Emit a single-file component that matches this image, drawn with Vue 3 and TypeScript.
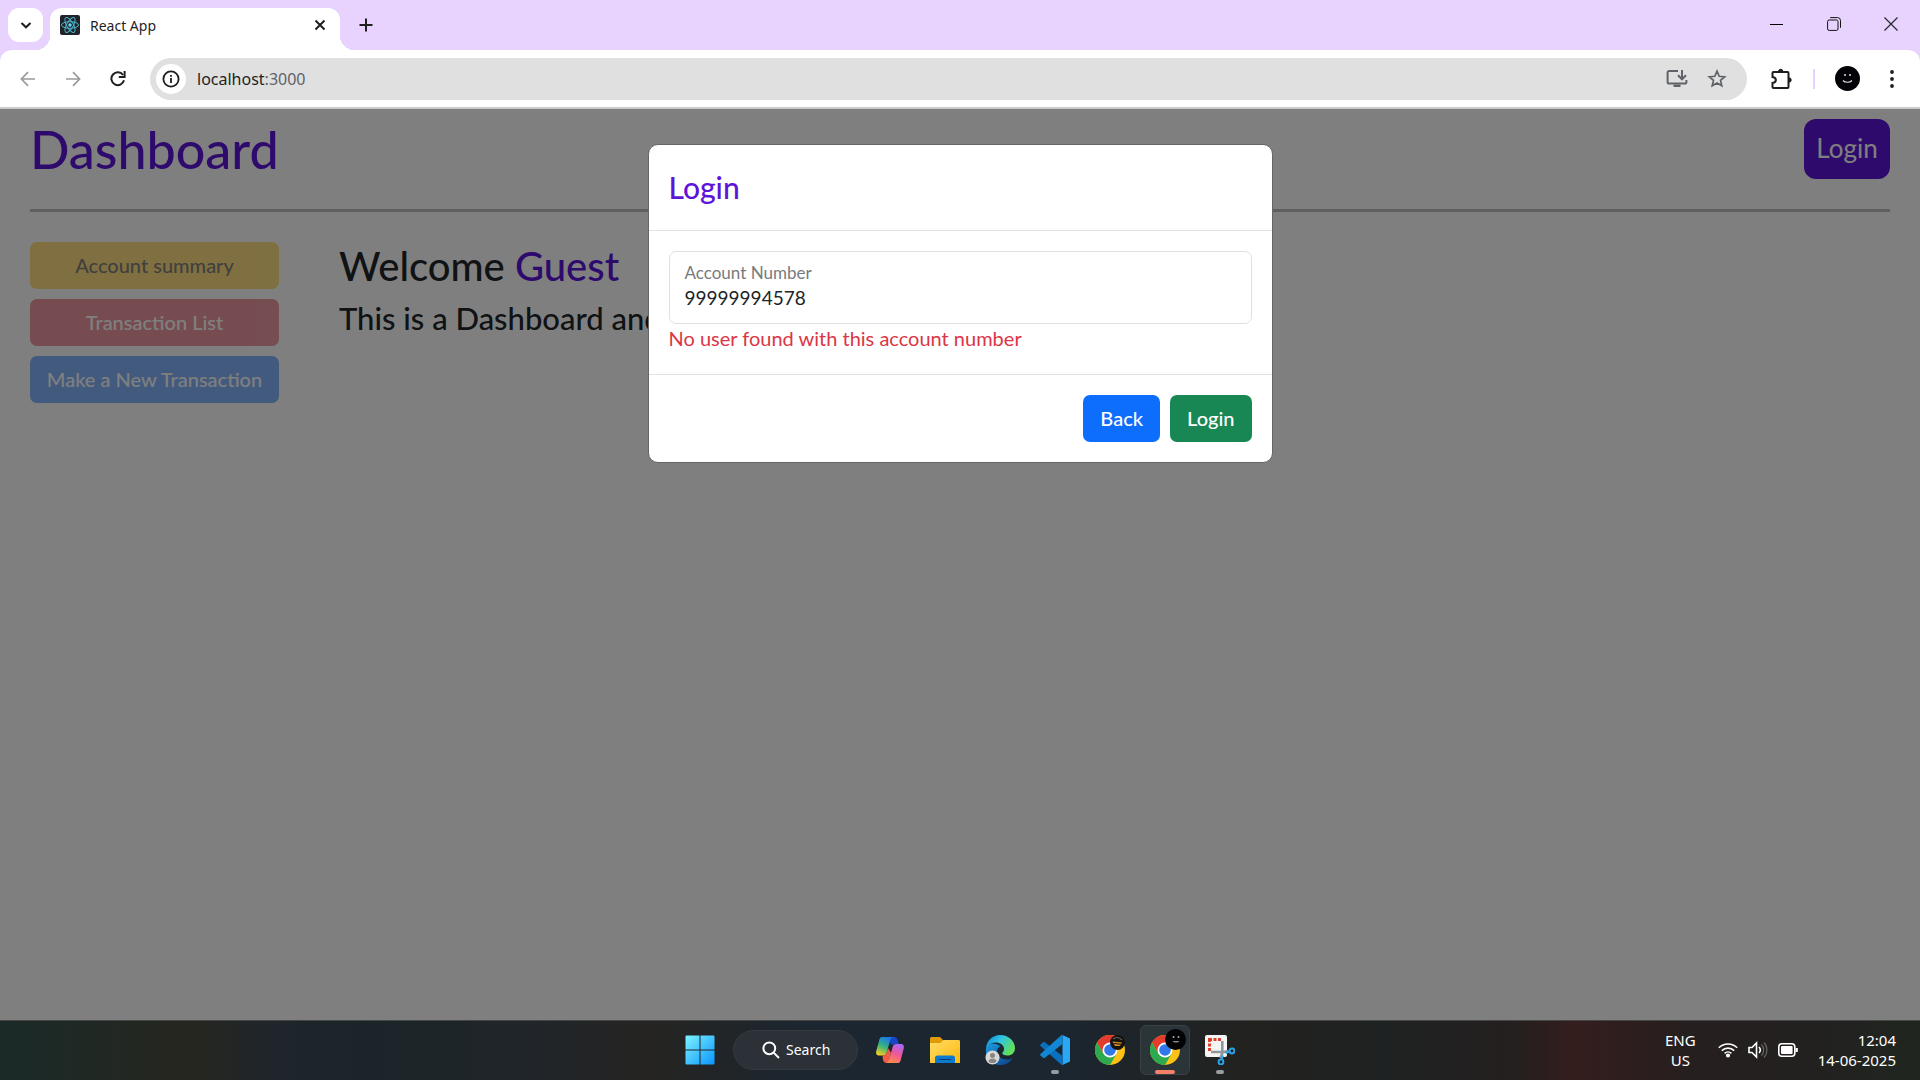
<script setup lang="ts">
import { ref } from 'vue'

interface NavAction {
  label: string
  tone: 'warning' | 'danger' | 'primary'
}

const address = ref('localhost:3000')
const accountNumber = ref('99999994578')
const errorMessage = ref('No user found with this account number')

const actions: NavAction[] = [
  { label: 'Account summary', tone: 'warning' },
  { label: 'Transaction List', tone: 'danger' },
  { label: 'Make a New Transaction', tone: 'primary' },
]
</script>

<template>
  <div class="screen">
    <header class="browser">
      <div class="tabstrip">
        <button class="tab-search" aria-label="Search tabs">
          <svg width="12" height="12" viewBox="0 0 12 12" fill="none" stroke="#1f1f1f" stroke-width="2"><path d="M1.5 4 6 8.3 10.5 4" /></svg>
        </button>
        <div class="tab">
          <svg class="favicon" width="20" height="20" viewBox="0 0 20 20" fill="none" stroke="#4db5cd" stroke-width="1">
            <rect width="20" height="20" rx="2" fill="#20232a" stroke="none" />
            <ellipse cx="10" cy="10" rx="8.5" ry="3.3" />
            <ellipse cx="10" cy="10" rx="8.5" ry="3.3" transform="rotate(60 10 10)" />
            <ellipse cx="10" cy="10" rx="8.5" ry="3.3" transform="rotate(120 10 10)" />
            <circle cx="10" cy="10" r="1.7" fill="#61dafb" stroke="none" />
          </svg>
          <span class="tab-title">React App</span>
          <button class="icon-btn small" aria-label="Close tab">
            <svg width="12" height="12" viewBox="0 0 12 12" stroke="#1f1f1f" stroke-width="2"><path d="M1.5 1.5l9 9M10.5 1.5l-9 9" /></svg>
          </button>
        </div>
        <button class="icon-btn new-tab" aria-label="New tab">
          <svg width="14" height="14" viewBox="0 0 14 14" stroke="#1f1f1f" stroke-width="2"><path d="M7 .5v13M.5 7h13" /></svg>
        </button>
        <div class="window-controls">
          <button aria-label="Minimize"><svg width="13" height="13" viewBox="0 0 13 13" stroke="#000"><path d="M0 6.5h13" /></svg></button>
          <button aria-label="Restore"><svg width="14" height="14" viewBox="0 0 14 14" fill="none" stroke="#111"><rect x=".6" y="3" width="10.4" height="10.4" rx="1.5" /><path d="M3.2.6h7.3a3 3 0 0 1 3 3v7.2" /></svg></button>
          <button aria-label="Close"><svg width="14" height="14" viewBox="0 0 14 14" stroke="#222" stroke-width="1.1"><path d="M.5.5l13 13M13.5.5l-13 13" /></svg></button>
        </div>
      </div>

      <div class="toolbar">
        <button class="icon-btn nav" aria-label="Back">
          <svg width="16" height="16" viewBox="0 0 16 16" fill="none" stroke="#9b9b9b" stroke-width="1.7"><path d="M15 8H2M8 1.2 1.4 8 8 14.8" /></svg>
        </button>
        <button class="icon-btn nav" aria-label="Forward">
          <svg width="16" height="16" viewBox="0 0 16 16" fill="none" stroke="#9b9b9b" stroke-width="1.7"><path d="M1 8h13M8 1.2 14.6 8 8 14.8" /></svg>
        </button>
        <button class="icon-btn nav" aria-label="Reload">
          <svg width="16" height="16" viewBox="0 0 16 16" fill="none" stroke="#1f1f1f" stroke-width="2"><path d="M14 9.3A6.4 6.4 0 1 1 13 4" /><path d="M14.6 0v6H8.8" /></svg>
        </button>
        <div class="omnibox">
          <button class="site-info" aria-label="View site information">
            <svg width="18" height="18" viewBox="0 0 18 18" fill="none" stroke="#1f1f1f" stroke-width="1.8"><circle cx="9" cy="9" r="7.6" /><path d="M9 8v5M9 5v1.8" /></svg>
          </button>
          <div class="address">
            <span class="host">{{ address.split(':')[0] }}</span><span class="port">:{{ address.split(':')[1] }}</span>
          </div>
          <button class="icon-btn omni-action" aria-label="Install app">
            <svg width="22" height="20" viewBox="0 0 22 20" fill="none" stroke="#5f6368" stroke-width="2"><path d="M12 2H3.2A1.6 1.6 0 0 0 1.6 3.6V13a1.6 1.6 0 0 0 1.6 1.6h15.6a1.6 1.6 0 0 0 1.6-1.6v-2M16 1v9M12 6.3l4 4 4-4" /><path d="M7.5 15.5h7V18h-7z" fill="#5f6368" stroke="none" /></svg>
          </button>
          <button class="icon-btn omni-action" aria-label="Bookmark this tab">
            <svg width="20" height="20" viewBox="0 0 20 20" fill="none" stroke="#5f6368" stroke-width="1.7"><path d="M10 2.2l2.2 5.1 5.5.5-4.2 3.6 1.3 5.4L10 13.9l-4.800 2.900 1.300-5.400-4.200-3.600 5.500-.5z" /></svg>
          </button>
        </div>
        <button class="icon-btn ext" aria-label="Extensions">
          <svg width="22" height="22" viewBox="0 0 22 22" fill="none" stroke="#1f1f1f" stroke-width="2"><path d="M3.500 4h14a1 1 0 0 1 1 1v14a1 1 0 0 1-1 1h-14a1 1 0 0 1-1-1v-4c4.500-.5 4.500-5.500 0-6V5a1 1 0 0 1 1-1z" /><path d="M8.500 3.500a2.200 2.200 0 0 1 4.400 0zM19 9.800a2.200 2.200 0 0 1 0 4.400z" fill="#1f1f1f" stroke-width="1" /></svg>
        </button>
        <span class="divider"></span>
        <button class="icon-btn profile" aria-label="Profile">
          <svg width="25" height="25" viewBox="0 0 25 25"><circle cx="12.500" cy="12.500" r="12.500" fill="#030307" /><path d="M8 14.500c2 2.300 7 2.300 9 0" fill="none" stroke="#ddd" stroke-width="1.200" /><circle cx="10" cy="9" r="1" fill="#ddd" /><circle cx="15" cy="9" r="1" fill="#ddd" /></svg>
        </button>
        <button class="icon-btn more" aria-label="Menu">
          <svg width="4" height="18" viewBox="0 0 4 18" fill="#1f1f1f"><circle cx="2" cy="2" r="1.900" /><circle cx="2" cy="9" r="1.900" /><circle cx="2" cy="16" r="1.900" /></svg>
        </button>
      </div>
    </header>

    <div class="viewport">
      <main class="page">
        <div class="page-head">
          <h1>Dashboard</h1>
          <button class="login-btn">Login</button>
        </div>
        <hr />
        <div class="content">
          <nav class="actions">
            <button v-for="action in actions" :key="action.label" class="btn" :class="action.tone" disabled>{{ action.label }}</button>
          </nav>
          <section class="intro">
            <h2>Welcome <span class="accent">Guest</span></h2>
            <p>This is a Dashboard and</p>
          </section>
        </div>
      </main>

      <div class="backdrop">
        <form class="modal" role="dialog" aria-labelledby="modal-title" @submit.prevent>
          <div class="modal-head">
            <h3 id="modal-title">Login</h3>
          </div>
          <div class="modal-body">
            <div class="field">
              <label for="account">Account Number</label>
              <input id="account" v-model="accountNumber" type="text" />
            </div>
            <p class="error">{{ errorMessage }}</p>
          </div>
          <div class="modal-foot">
            <button type="button" class="btn primary">Back</button>
            <button type="submit" class="btn success">Login</button>
          </div>
        </form>
      </div>
    </div>

    <footer class="taskbar">
      <div class="task-center">
        <button class="task" aria-label="Start">
          <svg width="30" height="30" viewBox="0 0 30 30">
            <defs><linearGradient id="win" x1="0" y1="0" x2="1" y2="1"><stop offset="0" stop-color="#7df3ff" /><stop offset="1" stop-color="#0a95ff" /></linearGradient></defs>
            <path d="M1.500.5h13v14H.500v-13a1 1 0 0 1 1-1zM15.500.5h13a1 1 0 0 1 1 1v13h-14zM.500 15.500h14v14h-13a1 1 0 0 1-1-1zM15.500 15.500h14v13a1 1 0 0 1-1 1h-13z" fill="url(#win)" />
          </svg>
        </button>
        <button class="search">
          <svg width="18" height="18" viewBox="0 0 18 18" fill="none" stroke="#fff" stroke-width="2"><circle cx="7.300" cy="7.300" r="5.900" /><path d="M11.600 11.600l5.400 5.400" /></svg>
          <span>Search</span>
        </button>
        <button class="task" aria-label="Copilot">
          <svg width="30" height="30" viewBox="0 0 30 30">
            <defs>
              <linearGradient id="cpA" x1=".6" y1="0" x2=".2" y2="1"><stop offset="0" stop-color="#1b78e8" /><stop offset=".5" stop-color="#38b47c" /><stop offset="1" stop-color="#ffd11a" /></linearGradient>
              <linearGradient id="cpB" x1=".7" y1="0" x2=".3" y2="1"><stop offset="0" stop-color="#a968f5" /><stop offset=".5" stop-color="#ee5798" /><stop offset="1" stop-color="#ff8a4a" /></linearGradient>
            </defs>
            <path d="M13 2h6.500c2 0 2.700 1.500 3.300 3.500L24 9.500h-8z" fill="#1746c8" />
            <path d="M7 2h10.500c-1.500.7-2 2-2.500 4l-3.200 11c-.7 2.500-1.600 3.500-4 3.500H4.500C1.500 20.500.6 18.500 1.300 16L4 6c.6-2.500 1.200-4 3-4z" fill="url(#cpA)" />
            <path d="M7.500 20.500c2.500 0 3.600-1 4.300-3.500l1.200-4 3 5-2.500 10h-2c-2 0-3-1.500-3.600-3.500z" fill="#f25c4a" />
            <path d="M23 28H11.500c1.700-.7 2.200-2 2.800-4l3.200-11.500C18.200 10 19 9 21.500 9h4c3 0 3.900 2 3.200 4.500L26 24c-.6 2.500-1.200 4-3 4z" fill="url(#cpB)" />
          </svg>
        </button>
        <button class="task" aria-label="File Explorer">
          <svg width="30" height="28" viewBox="0 0 30 28">
            <defs><linearGradient id="fold" x1="0" y1="0" x2="1" y2="1"><stop offset="0" stop-color="#ffdc68" /><stop offset="1" stop-color="#ffb90a" /></linearGradient></defs>
            <path d="M0 2.500A1.500 1.500 0 0 1 1.500 1H10l3 3h15.500A1.500 1.500 0 0 1 30 5.500V12H0z" fill="#e19a08" />
            <path d="M0 7h10.500L13.500 4H28.500A1.500 1.500 0 0 1 30 5.500V27H0z" fill="url(#fold)" />
            <path d="M5 27v-5a2.500 2.500 0 0 1 2.500-2.500h15A2.500 2.500 0 0 1 25 22v5z" fill="#0c79cf" />
            <path d="M9 23.500h12" stroke="#073f78" />
          </svg>
        </button>
        <button class="task" aria-label="Edge">
          <svg width="30" height="30" viewBox="0 0 30 30">
            <defs>
              <linearGradient id="edA" x1="0" y1="0" x2="1" y2=".5"><stop offset="0" stop-color="#0b84dd" /><stop offset=".5" stop-color="#30c5e0" /><stop offset="1" stop-color="#60e05b" /></linearGradient>
              <linearGradient id="edB" x1="0" y1="0" x2="1" y2="1"><stop offset="0" stop-color="#1b9de2" /><stop offset="1" stop-color="#0c3f88" /></linearGradient>
            </defs>
            <path d="M1 13C-.5 24 7 30 15 30c6 0 10-2.500 12.500-6.500-8 3-15.500-1-15.500-7 0-2.500 1.500-4.500 3.500-5.500C9 7 3 8 1 13z" fill="url(#edB)" />
            <path d="M1 13C2 5 8 0 15 0c9 0 15 6.500 15 13 0 5-3.500 7.500-7.500 7.500-3.500 0-5.200-1-5.200-2.200 0-1 1.700-1.400 1.700-4.300C19 7.500 7 4 1 13z" fill="url(#edA)" />
            <circle cx="7.500" cy="22.500" r="7" fill="#d9d7d5" /><circle cx="7.500" cy="20.500" r="2.500" fill="#888583" /><path d="M3.500 26.500c0-4 8-4 8 0-2 2-6 2-8 0z" fill="#888583" />
          </svg>
        </button>
        <button class="task running" aria-label="Visual Studio Code">
          <svg width="30" height="30" viewBox="0 0 30 30">
            <path d="M22.500 0L30 3.500v23L22.500 30z" fill="#2aa7f5" />
            <path d="M.5 9.500L3 7.300c.6-.4 1.200-.4 1.800 0L22.500 21v9c-.7 0-1.300-.3-1.800-.8L.5 11c-.6-.5-.6-1 0-1.500z" fill="#0a6fbd" />
            <path d="M.5 20.500L3 22.700c.6.4 1.200.4 1.800 0L22.500 9V0c-.7 0-1.300.3-1.800.8L.5 19c-.6.5-.6 1 0 1.500z" fill="#1287d6" />
          </svg>
        </button>
        <button class="task" aria-label="Chrome, work profile">
          <svg width="30" height="30" viewBox="0 0 30 30">
            <circle cx="15" cy="15" r="15" fill="#fbc116" />
            <path d="M2 7.500A15 15 0 0 1 28 7.500H15L8.500 18.700z" fill="#e33b2e" />
            <path d="M2 7.500A15 15 0 0 0 15 30l6.500-11.300L8.500 18.700z" fill="#2da94f" />
            <circle cx="15" cy="15" r="7.500" fill="#fff" /><circle cx="15" cy="15" r="5.800" fill="#2f78ea" />
            <circle cx="22.500" cy="7.500" r="7.500" fill="#151310" /><path d="M17.500 6.500l9.500 1-2 3.500h-5z" fill="#d58b25" /><path d="M18 4c3-2 6-2 9 1" stroke="#777" fill="none" /><path d="M19 8.500l7 .7" stroke="#151310" />
          </svg>
        </button>
        <button class="task active" aria-label="Chrome">
          <svg width="36" height="36" viewBox="0 -6 36 36">
            <circle cx="15" cy="15" r="15" fill="#fbc116" />
            <path d="M2 7.500A15 15 0 0 1 28 7.500H15L8.500 18.700z" fill="#e33b2e" />
            <path d="M2 7.500A15 15 0 0 0 15 30l6.500-11.300L8.500 18.700z" fill="#2da94f" />
            <circle cx="15" cy="15" r="7.500" fill="#fff" /><circle cx="15" cy="15" r="5.800" fill="#2f78ea" />
            <circle cx="25.500" cy="4.500" r="10.500" fill="#020204" /><circle cx="23.500" cy="2" r="1" fill="#aaa" /><circle cx="28.500" cy="2" r="1" fill="#aaa" /><path d="M22.500 6c1.500 2 5.500 2 7 0z" fill="#888" />
          </svg>
        </button>
        <button class="task running" aria-label="Snipping Tool">
          <svg width="30" height="30" viewBox="0 0 30 30" fill="none">
            <rect width="22" height="22" rx="2" fill="#f4f4f5" />
            <path d="M3 3h4v3H6v1H3zM8.500 3h3v3h-3zM13 3h3v3h-3zM3 8.500h3v3H3zM3 13h3v3H3z" fill="#d9402a" />
            <path d="M17.300 6v12l-1.800 5M6 17h13l4-1" stroke="#8f969c" stroke-width="2.600" />
            <circle cx="16" cy="27" r="2.400" stroke="#2aa3e8" stroke-width="2" /><circle cx="27" cy="16" r="2.400" stroke="#2aa3e8" stroke-width="2" /><path d="M16.500 24.500l1.500-4M24.500 16.500l-4 1.500" stroke="#2aa3e8" stroke-width="2" />
          </svg>
        </button>
      </div>
      <div class="tray">
        <button class="lang"><span>ENG</span><span>US</span></button>
        <button class="status" aria-label="Network, sound, battery">
          <svg width="20" height="16" viewBox="0 0 20 16" fill="none" stroke="#fff" stroke-width="1.600"><path d="M.8 5.800a13 13 0 0 1 18.400 0M3.800 8.600a9 9 0 0 1 12.400 0M6.600 11.300a5 5 0 0 1 6.800 0" /><circle cx="10" cy="13.500" r="1.300" fill="#fff" /></svg>
          <svg width="20" height="18" viewBox="0 0 20 18" fill="none" stroke="#fff" stroke-width="1.600"><path d="M1 6.500h3L8.500 2v14L4 11.500H1z" /><path d="M11 6a4.500 4.500 0 0 1 0 6" /><path d="M13.500 3.500a8 8 0 0 1 0 11M16 1.500a11 11 0 0 1 0 15" stroke="#666" stroke-width="1.200" /></svg>
          <svg width="20" height="14" viewBox="0 0 20 14" fill="none" stroke="#fff" stroke-width="1.600"><rect x=".8" y=".8" width="16" height="12.400" rx="3" /><rect x="3" y="3" width="11.600" height="8" rx="1" fill="#fff" stroke="none" /><path d="M18.700 5v4" stroke-width="2.200" /></svg>
        </button>
        <button class="clock"><span>12:04</span><span>14-06-2025</span></button>
      </div>
    </footer>
  </div>
</template>

<style>
body {
  margin: 0;
}
</style>

<style scoped>
* {
  box-sizing: border-box;
}

button {
  border: 0;
  padding: 0;
  background: none;
  font: inherit;
  color: inherit;
}

svg {
  display: block;
  flex: none;
}

.screen {
  display: flex;
  flex-direction: column;
  min-height: 100vh;
  font-family: 'Noto Sans', 'Open Sans', sans-serif;
  color: #1f1f1f;
}

/* Browser chrome */
.browser {
  background: #e8d3ff;
  border-bottom: 2px solid #cbcbcb;
}

.tabstrip {
  display: flex;
  align-items: flex-start;
  height: 50px;
  padding: 8px 1px 0 8px;
}

.tab-search {
  display: flex;
  align-items: center;
  justify-content: center;
  width: 35px;
  height: 34px;
  border-radius: 11px;
  background: #fff;
}

.tab {
  position: relative;
  display: flex;
  align-items: center;
  gap: 10px;
  width: 290px;
  height: 42px;
  margin-left: 7px;
  padding: 0 10px 8px;
  border-radius: 12px 12px 0 0;
  background: #fff;
}

.tab::before,
.tab::after {
  content: '';
  position: absolute;
  bottom: 0;
  width: 14px;
  height: 14px;
}

.tab::before {
  right: 100%;
  background: radial-gradient(circle at 0 0, transparent 14px, #fff 14px);
}

.tab::after {
  left: 100%;
  background: radial-gradient(circle at 100% 0, transparent 14px, #fff 14px);
}

.tab-title {
  flex: 1;
  padding-top: 2px;
  font-size: 14px;
  line-height: 20px;
}

.icon-btn {
  display: flex;
  align-items: center;
  justify-content: center;
}

.icon-btn.small {
  width: 20px;
  height: 20px;
}

.icon-btn.new-tab {
  width: 34px;
  height: 34px;
  margin-left: 9px;
}

.window-controls {
  display: flex;
  margin-left: auto;
}

.window-controls button {
  display: flex;
  align-items: center;
  justify-content: center;
  width: 57px;
  height: 32px;
}

.toolbar {
  display: flex;
  align-items: center;
  height: 57px;
  padding: 0 18px 0 5px;
  border-radius: 12px 12px 0 0;
  background: #fff;
}

.nav {
  width: 45px;
  height: 42px;
}

.omnibox {
  flex: 1;
  display: flex;
  align-items: center;
  height: 42px;
  margin-left: 10px;
  padding: 0 10px 0 6px;
  border-radius: 21px;
  background: #e0e0e0;
}

.site-info {
  display: flex;
  align-items: center;
  justify-content: center;
  width: 30px;
  height: 30px;
  border-radius: 50%;
  background: #fff;
}

.address {
  flex: 1;
  padding-left: 11px;
  font-size: 16px;
  line-height: 24px;
}

.port {
  color: #5f6368;
}

.omni-action {
  width: 40px;
  height: 42px;
}

.ext {
  width: 40px;
  height: 42px;
  margin-left: 14px;
}

.divider {
  width: 2px;
  height: 20px;
  margin-left: 12px;
  background: #e8d3ff;
}

.profile {
  width: 40px;
  height: 42px;
  margin-left: 12px;
}

.more {
  width: 20px;
  height: 42px;
  margin-left: 15px;
}

/* Web page */
.viewport {
  position: relative;
  flex: 1;
  display: grid;
  font-family: Lato, 'Open Sans', sans-serif;
  font-size: 20px;
  line-height: 30px;
  color: #212529;
}

.viewport > * {
  grid-area: 1 / 1;
}

.page {
  padding: 10px 30px;
  background: #fff;
}

.page-head {
  display: flex;
  align-items: flex-start;
  justify-content: space-between;
}

h1,
h2,
h3,
p {
  margin: 0;
  font-weight: 500;
}

h1,
h2,
h3,
.intro p,
.btn {
  font-family: 'Lato Medium', Lato, 'Open Sans', sans-serif;
}

h1 {
  font-size: 52px;
  line-height: 60px;
  color: #5c14da;
}

.login-btn {
  width: 86px;
  height: 60px;
  padding-bottom: 2px;
  border-radius: 12px;
  background: #5c14da;
  color: #fff;
  font-size: 26px;
}

hr {
  height: 3px;
  margin: 30px 0;
  border: 0;
  background: #bfbfbf;
}

.content {
  display: flex;
  gap: 60px;
}

.actions {
  display: flex;
  flex-direction: column;
  gap: 10px;
  width: 249px;
}

.btn {
  height: 47px;
  padding: 0 17px 2px;
  border-radius: 7px;
  color: #fff;
  font-weight: 500;
  white-space: nowrap;
}

.btn:disabled {
  opacity: 0.5;
  padding: 0 0 2px;
}

.warning {
  background: #ffc107;
  color: #000;
  font-weight: 400;
}

.danger {
  background: #dc3545;
}

.primary {
  background: #0d6efd;
}

.success {
  background: #198754;
}

.intro h2 {
  font-size: 40px;
  line-height: 48px;
}

.intro p {
  margin-top: 10px;
  font-size: 31px;
  line-height: 36px;
}

.accent {
  color: #5c14da;
}

.backdrop {
  z-index: 1;
  display: flex;
  justify-content: center;
  align-items: flex-start;
  padding-top: 35px;
  background: rgba(0, 0, 0, 0.5);
}

.modal {
  width: 625px;
  border: 1px solid #666;
  border-radius: 10px;
  background: #fff;
}

.modal-head {
  padding: 20px;
  border-bottom: 1px solid #dee2e6;
}

.modal-head h3 {
  font-size: 30px;
  line-height: 45px;
  color: #5c14da;
}

.modal-body {
  padding: 20px;
}

.field {
  display: flex;
  flex-direction: column;
  height: 73px;
  padding: 9px 15px;
  border: 1px solid #dee2e6;
  border-radius: 7px;
}

.field label {
  font-size: 17px;
  line-height: 24px;
  color: #777a7d;
}

.field input {
  padding: 0;
  border: 0;
  outline: 0;
  background: none;
  font: inherit;
  font-size: 19px;
  line-height: 26px;
  color: inherit;
}

.error {
  padding-bottom: 2px;
  line-height: 28px;
  color: #dc3545;
  font-weight: 400;
}

.modal-foot {
  display: flex;
  justify-content: flex-end;
  gap: 10px;
  padding: 20px;
  border-top: 1px solid #dee2e6;
}

/* Taskbar */
.taskbar {
  display: grid;
  grid-template-columns: 1fr auto 1fr;
  align-items: center;
  height: 60px;
  box-shadow: inset 0 1px #444746;
  color: #fff;
  font-size: 14px;
  line-height: 20px;
  background: linear-gradient(90deg, #1b2a28, #26261f 10%, #1f252b 14%, #1b2529 19%, #20252a 27%, #252422 34%, #1b2630 42%, #1b2630 55%, #22221f 65%, #1f2222 72%, #251f1f 79%, #351d1d 82%, #261f1f 88%, #222120 95%, #20261f);
}

.task-center {
  grid-column: 2;
  display: flex;
  align-items: center;
  gap: 5px;
}

.task {
  position: relative;
  display: flex;
  align-items: center;
  justify-content: center;
  width: 50px;
  height: 50px;
}

.search {
  display: flex;
  align-items: center;
  gap: 6px;
  width: 125px;
  height: 40px;
  margin: 0 2px 0 3px;
  padding-left: 28px;
  border: 1px solid #343a40;
  border-radius: 20px;
  background: #2b3136;
}

.active {
  border: 1px solid #3a4145;
  border-radius: 6px;
  background: #2b3438;
}

.active svg {
  margin: -6px 0 0 6px;
}

.running::after,
.active::after {
  content: '';
  position: absolute;
  bottom: 1px;
  left: 50%;
  width: 8px;
  height: 4px;
  margin-left: -4px;
  border-radius: 2px;
  background: #999c9e;
}

.active::after {
  bottom: 0;
  width: 20px;
  margin-left: -10px;
  background: #f58068;
}

.tray {
  display: flex;
  justify-content: flex-end;
  align-items: center;
  padding-right: 24px;
  font-size: 15px;
}

.lang,
.clock {
  display: flex;
  flex-direction: column;
}

.lang {
  align-items: center;
}

.clock {
  align-items: flex-end;
  margin-left: 20px;
}

.status {
  display: flex;
  align-items: center;
  gap: 10px;
  margin-left: 22px;
}
</style>
